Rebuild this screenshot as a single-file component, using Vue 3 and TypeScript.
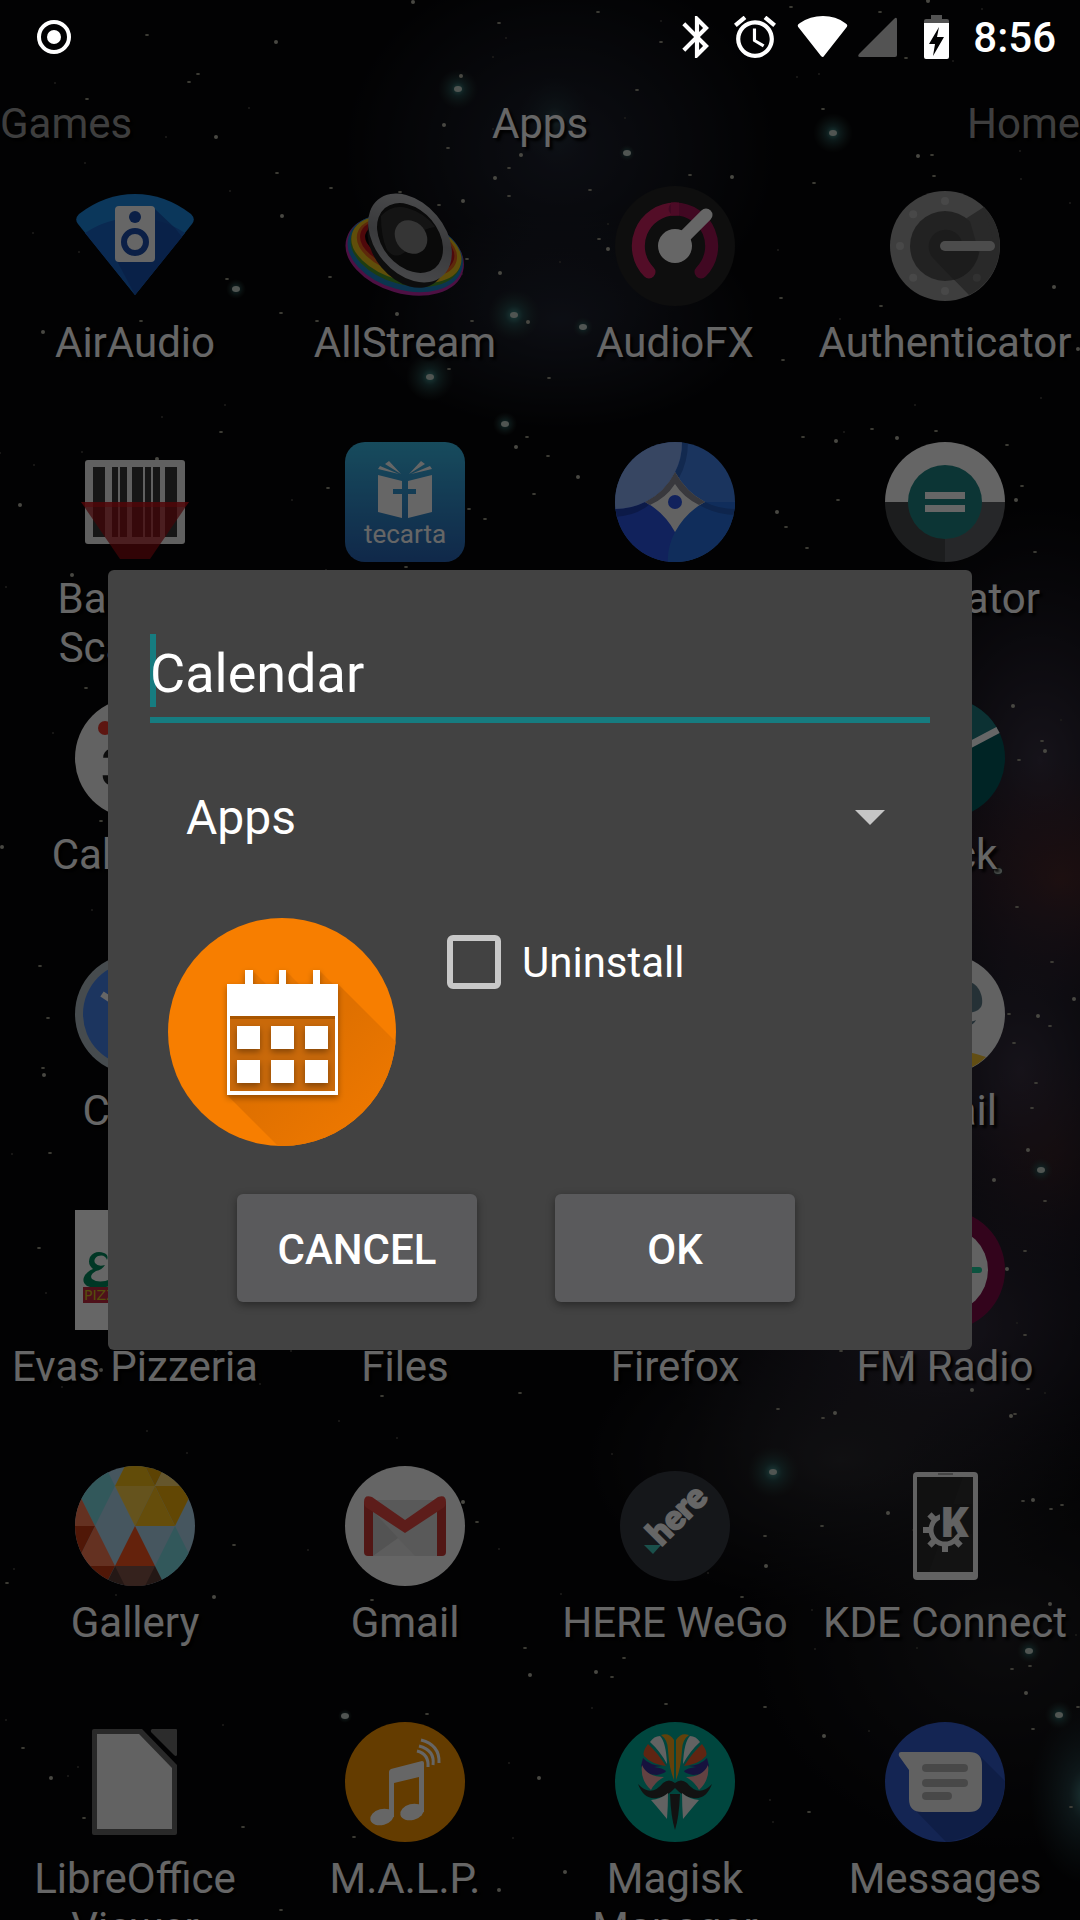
<script setup lang="ts">
import { ref } from 'vue'

interface AppEntry {
  icon: string
  name: string
}

const apps: AppEntry[] = [
  { icon: 'airaudio', name: 'AirAudio' },
  { icon: 'allstream', name: 'AllStream' },
  { icon: 'audiofx', name: 'AudioFX' },
  { icon: 'authenticator', name: 'Authenticator' },
  { icon: 'barcode', name: 'Barcode Scanner' },
  { icon: 'tecarta', name: '' },
  { icon: 'browser', name: '' },
  { icon: 'calculator', name: 'Calculator' },
  { icon: 'calendar', name: 'Calendar' },
  { icon: '', name: '' },
  { icon: '', name: '' },
  { icon: 'clock', name: 'Clock' },
  { icon: 'watch', name: 'Clock' },
  { icon: '', name: '' },
  { icon: '', name: '' },
  { icon: 'email', name: 'Email' },
  { icon: 'pizzeria', name: 'Evas Pizzeria' },
  { icon: '', name: 'Files' },
  { icon: '', name: 'Firefox' },
  { icon: 'radio', name: 'FM Radio' },
  { icon: 'gallery', name: 'Gallery' },
  { icon: 'gmail', name: 'Gmail' },
  { icon: 'here', name: 'HERE WeGo' },
  { icon: 'kde', name: 'KDE Connect' },
  { icon: 'libre', name: 'LibreOffice Viewer' },
  { icon: 'malp', name: 'M.A.L.P.' },
  { icon: 'magisk', name: 'Magisk Manager' },
  { icon: 'messages', name: 'Messages' },
]

const stars: [number, number][] = [
  [413, 2], [598, 12], [499, 23], [276, 42], [198, 74], [189, 82], [461, 76], [637, 90], [823, 109], [444, 125],
  [661, 42], [791, 7], [928, 1], [880, 12], [906, 58], [918, 156], [932, 155], [448, 148], [521, 155], [147, 35],
  [87, 99], [216, 137], [277, 173], [331, 188], [282, 216], [227, 279], [141, 321], [43, 332], [281, 313],
  [330, 277], [397, 314], [317, 321], [509, 168], [495, 178], [509, 196], [439, 205], [463, 201], [400, 192],
  [467, 259], [528, 322], [449, 369], [472, 321], [500, 273], [590, 190], [690, 175], [732, 177], [814, 183],
  [599, 239], [608, 249], [549, 378], [783, 360], [1054, 287], [881, 306], [934, 176], [1078, 349], [781, 298],
  [221, 432], [157, 459], [328, 488], [527, 437], [516, 447], [469, 509], [485, 519], [20, 505], [534, 494],
  [406, 567], [72, 575], [548, 456], [803, 437], [836, 441], [872, 429], [936, 431], [897, 438], [1007, 445],
  [838, 500], [777, 512], [786, 527], [807, 548], [1016, 500], [1022, 486], [1035, 552], [578, 477], [86, 688],
  [101, 821], [2, 847], [40, 966], [48, 1018], [44, 1075], [50, 1153], [43, 1068], [1013, 706], [1019, 760],
  [1042, 741], [1045, 751], [1017, 907], [1052, 962], [1074, 999], [1009, 1014], [1050, 1026], [1038, 1016],
  [1036, 1083], [1032, 1108], [1028, 1150], [1014, 1043], [39, 1248], [101, 1370], [382, 1396], [520, 1393],
  [994, 1180], [1045, 1201], [1025, 1251], [1007, 1269], [1025, 1335], [1028, 1389], [972, 1390], [902, 1357],
  [778, 1409], [835, 1413], [841, 1351], [1015, 1414], [1011, 1416], [823, 1418], [234, 1545], [214, 1597],
  [7, 1583], [477, 1522], [463, 1502], [372, 1600], [525, 1648], [530, 1675], [427, 1714], [23, 1748], [51, 1778],
  [84, 1818], [243, 1827], [499, 1890], [281, 1910], [354, 1837], [539, 1778], [765, 1536], [822, 1526],
  [766, 1566], [742, 1597], [1023, 1501], [1033, 1500], [1051, 1509], [1062, 1505], [888, 1513], [1012, 1669],
  [1030, 1666], [1026, 1693], [1078, 1707], [1033, 1729], [824, 1736], [765, 1707], [666, 1704], [596, 1672],
  [612, 1677], [624, 1658], [565, 1872], [809, 1812], [1071, 1807], [1050, 1604],
]

/* x, y, halo radius */
const glows: [number, number, number][] = [
  [458, 89, 20], [833, 133, 20], [627, 153, 8], [236, 289, 10], [514, 315, 26], [430, 377, 24], [583, 327, 10],
  [505, 424, 12], [1041, 1170, 12], [773, 1472, 26], [345, 1716, 7], [1029, 1651, 12], [1059, 1715, 14],
  [998, 871, 6],
]

const dust: [number, number][] = []
let seed = 17
const next = (): number => {
  seed = (seed * 16807) % 2147483647
  return seed / 2147483647
}
for (let i = 0; i < 120; i++) {
  dust.push([Math.round(next() * 1080), Math.round(next() * 1920)])
}

const title = ref('Calendar')
const group = ref('Apps')
const uninstall = ref(false)
const dotAngles = [90, 135, 180, 225, 270, 45]
const teeth = [0, 45, 90, 135, 180, 225, 270, 315]
</script>

<template>
  <div class="launcher">
    <svg class="wallpaper" viewBox="0 0 1080 1920" preserveAspectRatio="xMidYMid slice" aria-hidden="true">
      <defs>
        <radialGradient id="haze-blue">
          <stop offset="0" stop-color="#262b3c" stop-opacity=".8" />
          <stop offset="1" stop-color="#262b3c" stop-opacity="0" />
        </radialGradient>
        <radialGradient id="haze-red">
          <stop offset="0" stop-color="#5e2a24" stop-opacity=".8" />
          <stop offset="1" stop-color="#4a2230" stop-opacity="0" />
        </radialGradient>
        <radialGradient id="haze-violet">
          <stop offset="0" stop-color="#3d3548" stop-opacity=".9" />
          <stop offset="1" stop-color="#2a2638" stop-opacity="0" />
        </radialGradient>
        <radialGradient id="haze-grey">
          <stop offset="0" stop-color="#302f34" stop-opacity=".8" />
          <stop offset="1" stop-color="#26252c" stop-opacity="0" />
        </radialGradient>
        <radialGradient id="haze-teal">
          <stop offset="0" stop-color="#4a8a8a" />
          <stop offset=".3" stop-color="#2d4f55" stop-opacity=".7" />
          <stop offset="1" stop-color="#20343c" stop-opacity="0" />
        </radialGradient>
        <radialGradient id="star-glow">
          <stop offset="0" stop-color="#4a9c98" />
          <stop offset=".35" stop-color="#2a5a5a" stop-opacity=".7" />
          <stop offset="1" stop-color="#2a3a35" stop-opacity="0" />
        </radialGradient>
      </defs>
      <rect width="1080" height="1920" fill="#060608" />
      <ellipse cx="560" cy="150" rx="220" ry="190" fill="url(#haze-blue)" />
      <ellipse cx="560" cy="320" rx="200" ry="110" fill="url(#haze-blue)" />
      <ellipse cx="555" cy="120" rx="36" ry="44" fill="url(#haze-teal)" opacity=".5" />
      <ellipse cx="1040" cy="760" rx="180" ry="260" fill="url(#haze-violet)" />
      <ellipse cx="1060" cy="880" rx="130" ry="120" fill="url(#haze-red)" />
      <ellipse cx="1020" cy="1070" rx="190" ry="280" fill="url(#haze-violet)" />
      <ellipse cx="1050" cy="1160" rx="90" ry="110" fill="url(#haze-red)" opacity=".4" />
      <ellipse cx="940" cy="1330" rx="280" ry="190" fill="url(#haze-violet)" />
      <ellipse cx="840" cy="1460" rx="260" ry="150" fill="url(#haze-grey)" />
      <ellipse cx="1000" cy="1640" rx="260" ry="220" fill="url(#haze-grey)" opacity=".7" />
      <ellipse cx="1086" cy="1795" rx="56" ry="90" fill="url(#haze-teal)" />
      <circle v-for="(d, i) in dust" :key="'d' + i" :cx="d[0]" :cy="d[1]" r="1" fill="#4c4a44" />
      <circle v-for="(g, i) in glows" :key="'g' + i" :cx="g[0]" :cy="g[1]" :r="g[2]" fill="url(#star-glow)" />
      <ellipse v-for="(g, i) in glows" :key="'h' + i" :cx="g[0]" :cy="g[1]" rx="4" ry="3" fill="#c8d4cc" />
      <ellipse
        v-for="(s, i) in stars"
        :key="'s' + i"
        :cx="s[0]"
        :cy="s[1]"
        rx="2"
        :ry="i % 3 ? 1 : 2"
        :fill="i % 3 ? '#a3a08f' : '#b5b3a5'"
      />
    </svg>

    <main class="home">
      <nav class="tabs" aria-label="Categories">
        <button type="button" class="tab">Games</button>
        <button type="button" class="tab tab-current">Apps</button>
        <button type="button" class="tab">Home</button>
      </nav>

      <div class="grid">
        <component :is="app.icon || app.name ? 'button' : 'div'" v-for="(app, i) in apps" :key="i" class="app">
          <svg class="app-icon" viewBox="0 0 120 120" aria-hidden="true">
            <g v-if="app.icon === 'airaudio'">
              <path d="M3 38Q-1 33 4 28Q30 8 60 8T116 28Q121 33 117 38L60 109Z" fill="#1d8ae4" />
              <path d="M10 47Q32 32 60 32T110 47L60 109Z" fill="#1b66cb" />
              <path d="M80 23L100 42L107 51L60 109L42 75Z" fill="#164fae" opacity=".8" />
              <rect x="40" y="20" width="40" height="56" rx="4" fill="#fff" />
              <circle cx="60" cy="31" r="6" fill="#1d4fae" />
              <circle cx="60" cy="56" r="11" fill="none" stroke="#1d4fae" stroke-width="6" />
            </g>
            <g v-else-if="app.icon === 'allstream'">
              <defs>
                <linearGradient id="rim" x2="1" y2="1">
                  <stop offset="0" stop-color="#c8c9cc" />
                  <stop offset=".5" stop-color="#8f9095" />
                  <stop offset="1" stop-color="#c0c1c6" />
                </linearGradient>
              </defs>
              <g transform="rotate(16 60 68)" fill="none" stroke-width="5">
                <ellipse cx="60" cy="69" rx="58" ry="36" stroke="#c22aa8" />
                <ellipse cx="60" cy="67" rx="56" ry="34" stroke="#1c84c6" stroke-width="6" />
                <ellipse cx="60" cy="65" rx="54" ry="31" stroke="#4c9a2c" />
                <ellipse cx="60" cy="63" rx="53" ry="28" stroke="#f0c419" stroke-width="7" />
                <ellipse cx="60" cy="61" rx="49" ry="25" stroke="#e8641c" />
                <ellipse cx="60" cy="60" rx="46" ry="22" stroke="#c4161c" />
              </g>
              <ellipse cx="61" cy="61" rx="46" ry="32" transform="rotate(50 61 61)" fill="#222" />
              <ellipse cx="65" cy="52" rx="50" ry="35" transform="rotate(50 65 52)" fill="url(#rim)" />
              <ellipse cx="65" cy="52" rx="39" ry="28" transform="rotate(50 65 52)" fill="#191919" />
              <path d="M36 30Q47 18 62 22Q80 27 90 41Q68 44 60 66Q50 74 42 64Q36 50 36 30Z" fill="#404040" opacity=".7" />
              <ellipse cx="66" cy="51" rx="18" ry="15" transform="rotate(50 66 51)" fill="#858585" />
            </g>
            <g v-else-if="app.icon === 'audiofx'">
              <circle cx="60" cy="60" r="60" fill="#232323" />
              <path d="M34 86A37 37 0 0 1 60 23" fill="none" stroke="#cf2263" stroke-width="13" stroke-linecap="round" />
              <path d="M60 23A37 37 0 0 1 86 86" fill="none" stroke="#a31555" stroke-width="13" stroke-linecap="round" />
              <path d="M56 23H64" stroke="#bd1c5f" stroke-width="13" />
              <path d="M62 58L91 29" stroke="#fff" stroke-width="13" stroke-linecap="round" />
              <circle cx="60" cy="60" r="17" fill="#fff" />
            </g>
            <g v-else-if="app.icon === 'authenticator'">
              <circle cx="60" cy="60" r="55" fill="#9b9b9b" />
              <path d="M99 21A55 55 0 0 1 84 109L44 68L60 46Z" fill="#666" />
              <circle cx="60" cy="60" r="35" fill="#555" />
              <path d="M99 21L85 35L92 60H110Z" fill="#666" />
              <path d="M48 72A17 17 0 1 1 77 56L94 66A35 35 0 0 1 69 94Z" fill="#464646" />
              <circle
                v-for="a in dotAngles"
                :key="a"
                :cx="60 + 45 * Math.cos((a * Math.PI) / 180)"
                :cy="60 + 45 * Math.sin((a * Math.PI) / 180)"
                r="4"
                :fill="a === 45 ? '#7b7b7b' : '#b4b4b4'"
              />
              <rect x="55" y="55" width="55" height="10" rx="5" fill="#bebebe" />
            </g>
            <g v-else-if="app.icon === 'barcode'">
              <rect x="10" y="18" width="100" height="84" rx="3" fill="#f0f0f0" />
              <path
                d="M18 25H30V95H18ZM37 25H43V95H37ZM45 25H52V95H45ZM57 25H68V95H57ZM70 25H76V95H70ZM78 25H85V95H78ZM90 25H102V95H90Z"
                fill="#383838"
              />
              <path d="M6 60H114L75 117H45Z" fill="#a80c12" opacity=".72" />
              <path d="M6 60H114L110 65H10Z" fill="#e01015" opacity=".5" />
            </g>
            <g v-else-if="app.icon === 'tecarta'">
              <defs>
                <linearGradient id="tecarta-bg" x2="0" y2="1">
                  <stop offset="0" stop-color="#3abce8" />
                  <stop offset="1" stop-color="#2965b8" />
                </linearGradient>
              </defs>
              <rect width="120" height="120" rx="20" fill="url(#tecarta-bg)" />
              <path
                d="M33 33L57 39V47H48V52H57V76L33 70ZM87 33L63 39V47H71V52H63V76L87 70ZM33 27L35 24L54 32ZM40 22L44 19L56 32ZM87 27L85 24L66 32ZM80 22L76 19L64 32Z"
                fill="#fff"
              />
              <text x="60" y="101" text-anchor="middle" font-size="26" fill="#fff">tecarta</text>
            </g>
            <g v-else-if="app.icon === 'browser'">
              <defs>
                <clipPath id="disc"><circle cx="60" cy="60" r="60" /></clipPath>
              </defs>
              <g clip-path="url(#disc)">
                <rect width="120" height="120" fill="#4383ec" />
                <path d="M0 60H60V120H0Z" fill="#2b55e6" />
                <path d="M60 90Q52 106 53 120H120V60H90Q72 68 60 90Z" fill="#2a72e4" />
                <path d="M90 60Q104 67 120 67V73Q102 73 84 63Z" fill="#1c4a9c" opacity=".5" />
                <path d="M30 60Q16 67 0 67V75Q20 74 34 63Z" fill="#1c3aa0" opacity=".7" />
                <path d="M60 30Q67 18 67 0H73Q73 20 64 36Z" fill="#1c4aa0" opacity=".5" />
                <path d="M60 30Q71 50 90 60Q71 70 60 90Q49 70 30 60Q50 50 60 30Z" fill="#f6f6f6" />
                <path d="M60 30Q71 50 90 60L84 63Q68 55 60 42Q51 56 35 63L30 60Q50 50 60 30Z" fill="#8c8c98" />
                <path d="M0 67Q16 67 30 60Q50 50 60 30Q67 16 67 0H0Z" fill="#8aaef4" />
                <circle cx="60" cy="60" r="7" fill="#2b55e6" />
              </g>
            </g>
            <g v-else-if="app.icon === 'calculator'">
              <path d="M0 60A60 60 0 0 1 120 60Z" fill="#fcfcfc" />
              <path d="M0 60A60 60 0 0 0 60 120V60Z" fill="#464a4c" />
              <path d="M120 60A60 60 0 0 1 60 120V60Z" fill="#606266" />
              <circle cx="60" cy="60" r="37" fill="#208684" />
              <path d="M40 50H80V57H40ZM40 63H80V70H40Z" fill="#fff" />
            </g>
            <g v-else-if="app.icon === 'calendar'">
              <circle cx="60" cy="60" r="60" fill="#f4f4f4" />
              <circle cx="30" cy="30" r="7" fill="#e8392c" />
              <text x="26" y="88" font-size="54" font-weight="700" fill="#222">31</text>
            </g>
            <g v-else-if="app.icon === 'clock'">
              <circle cx="60" cy="60" r="60" fill="#005a5e" />
              <path d="M60 60V0A60 60 0 0 1 112 30Z" fill="#1e7c80" />
              <path d="M60 60L113 32" stroke="#fff" stroke-width="7" />
            </g>
            <g v-else-if="app.icon === 'watch'">
              <circle cx="60" cy="60" r="60" fill="#aebcc4" />
              <circle cx="60" cy="60" r="52" fill="#4684ee" />
              <path d="M27 40L60 62" stroke="#fff" stroke-width="6" />
            </g>
            <g v-else-if="app.icon === 'email'">
              <circle cx="60" cy="60" r="60" fill="#f4f4f4" />
              <path d="M80 28C94 26 100 46 96 53Q92 59 80 59Z" fill="#5c7a88" />
              <path d="M80 68Q87 68 91 66Q89 70 84 72Z" fill="#5c7a88" />
              <path d="M60 94Q80 96 101 103Q86 118 60 120Z" fill="#f6c234" />
            </g>
            <g v-else-if="app.icon === 'pizzeria'">
              <rect width="120" height="120" fill="#fff" />
              <path
                d="M32 50Q30 44 23 46Q18 49 20 53Q23 57 30 55Q27 60 21 61Q14 65 17 69Q24 74 36 69V76Q20 80 12 76Q6 72 10 65Q13 61 18 59Q12 54 15 47Q20 40 29 43Q34 45 32 50Z"
                fill="#008a5c"
              />
              <rect x="8" y="77" width="104" height="16" fill="#c42b42" />
              <text x="9" y="90" class="pizza" font-size="14" fill="#d8c41c">PIZZERIA</text>
            </g>
            <g v-else-if="app.icon === 'radio'">
              <circle cx="60" cy="60" r="60" fill="#800c48" />
              <circle cx="60" cy="60" r="43" fill="#f4f4f4" />
              <path d="M24 60H94" stroke="#1ccf9f" stroke-width="6" stroke-linecap="round" />
            </g>
            <g v-else-if="app.icon === 'gallery'">
              <defs>
                <clipPath id="gallery-disc"><circle cx="60" cy="60" r="60" /></clipPath>
              </defs>
              <g clip-path="url(#gallery-disc)">
                <rect width="120" height="120" fill="#b0d6ee" />
                <path d="M0 0H30L40 20L20 60L0 20ZM100 60L120 100V120H90L80 100Z" fill="#7edbe4" />
                <path d="M50 0H70L80 20H40Z" fill="#f6bd18" />
                <path d="M70 0H90L80 20Z" fill="#e8a808" />
                <path d="M90 0L80 20H120Z" fill="#fdd66e" />
                <path d="M40 20H80L60 60Z" fill="#fdd04a" />
                <path d="M80 20H120L100 60Z" fill="#f4b20a" />
                <path d="M80 20L100 60H60Z" fill="#fcc01c" />
                <path d="M60 60L80 100H40Z" fill="#f9551f" />
                <path d="M0 20L20 60H0ZM20 60L40 100H0Z" fill="#fa7a54" />
                <path d="M0 60H20L0 100ZM0 100H40L30 120H0Z" fill="#c83a12" />
                <path d="M40 100H80L90 120H30Z" fill="#5a3c36" />
                <path d="M40 100H80L70 120H50Z" fill="#86564a" />
              </g>
            </g>
            <g v-else-if="app.icon === 'gmail'">
              <circle cx="60" cy="60" r="60" fill="#fcfcfc" />
              <path d="M24 34H96V90H24Z" fill="#dedede" />
              <path d="M28 45L54 73L28 90Z" fill="#cfcfcf" />
              <path d="M28 90L53 72L70 90Z" fill="#e8e8e8" />
              <path d="M19 36H28V90H23Q19 90 19 86ZM101 36H92V90H97Q101 90 101 86Z" fill="#cc3a36" />
              <path d="M19 36Q19 28 27 31L60 54L93 31Q101 28 101 36Q101 40 98 42L60 67L22 42Q19 40 19 36Z" fill="#e84a42" />
            </g>
            <g v-else-if="app.icon === 'here'">
              <circle cx="60" cy="60" r="55" fill="#363a42" />
              <path d="M29 79H46L38 88Z" fill="#42c9bc" />
              <text class="here" transform="translate(46 81) rotate(-45)" font-size="34" fill="#fff" stroke="#fff" stroke-width="2">here</text>
            </g>
            <g v-else-if="app.icon === 'kde'">
              <rect x="28" y="6" width="65" height="108" rx="4" fill="#f4f4f4" />
              <rect x="32" y="11" width="56" height="95" fill="#2b2b2b" />
              <path d="M78 11H88V106H44Z" fill="#383838" opacity=".5" />
              <path d="M53 8H68" stroke="#666" stroke-width="1" />
              <g fill="#f4f4f4">
                <rect v-for="t in teeth" :key="t" x="57" y="42" width="6" height="8" :transform="`rotate(${t} 60 64)`" />
              </g>
              <circle cx="60" cy="64" r="14" fill="none" stroke="#f4f4f4" stroke-width="5" />
              <path d="M55 38H87V68H80L74 66L68 72L55 72Z" fill="#2b2b2b" />
              <text class="kde-k" x="55" y="71" font-size="42" fill="#f4f4f4">K</text>
            </g>
            <g v-else-if="app.icon === 'libre'">
              <path d="M19 7H67L102 43V111Q102 113 100 113H19Q17 113 17 111V9Q17 7 19 7Z" fill="#686868" />
              <path d="M22 12H64L97 46V107H22Z" fill="#f6f6f6" />
              <path d="M77 7H101Q102 7 102 8V33Q101 35 99 33L76 10Q75 8 77 7Z" fill="#6e6e6e" />
            </g>
            <g v-else-if="app.icon === 'malp'">
              <circle cx="60" cy="60" r="60" fill="#fb9600" />
              <path d="M44 50Q44 48 46 47L77 39Q79 39 79 41V90H74V55L49 61V95H44Z" fill="#fff" />
              <ellipse cx="37" cy="95" rx="12" ry="8" transform="rotate(-15 37 95)" fill="#fff" />
              <ellipse cx="67" cy="90" rx="12" ry="8" transform="rotate(-15 67 90)" fill="#fff" />
              <path d="M72 29Q84 32 83 45M74 24Q90 28 88 43M76 18Q95 23 94 41" fill="none" stroke="#fff" stroke-width="3" />
            </g>
            <g v-else-if="app.icon === 'magisk'">
              <circle cx="60" cy="60" r="60" fill="#00af9b" />
              <g v-for="s in [1, -1]" :key="s" :transform="`translate(60 0) scale(${s} 1)`">
                <path d="M1 58V18Q6 10 14 13Q7 18 7 28Q6 46 1 58Z" fill="#f6a41c" />
                <path d="M8 42Q9 20 15 14Q21 14 25 20Q15 29 8 42Z" fill="#f4f4f4" />
                <path d="M9 44Q18 30 27 22Q33 30 31 34Q24 42 9 44Z" fill="#ee5c2e" />
                <path d="M13 44Q26 43 32 36L34 44Q29 53 18 53Q9 51 9 49Q12 46 21 45Z" fill="#372f9c" />
                <path d="M11 55Q28 55 33 43Q35 58 24 68Q20 60 11 55Z" fill="#f4a6a6" />
                <path d="M0 61Q6 56 12 61Q24 76 37 62Q31 78 18 76Q8 75 0 66Z" fill="#2d2d2d" />
                <path d="M7 71Q14 77 24 78Q17 86 8 97Q7 84 7 71Z" fill="#f4f4f4" />
                <path d="M0 72L5 72Q4 96 0 108Z" fill="#2d2d2d" />
              </g>
            </g>
            <g v-else-if="app.icon === 'messages'">
              <circle cx="60" cy="60" r="60" fill="#335cd0" />
              <path d="M95 34L120 59Q117 112 61 120L30 88Z" fill="#274bb0" />
              <path d="M16 30H84Q97 30 97 43V77Q97 90 84 90H37Q24 90 24 77V48L14 34Q13 30 16 30Z" fill="#f2f2f2" />
              <rect x="37" y="42" width="46" height="8" rx="4" fill="#b5b5b5" />
              <rect x="37" y="57" width="46" height="8" rx="4" fill="#b5b5b5" />
              <rect x="37" y="70" width="30" height="8" rx="4" fill="#b5b5b5" />
            </g>
          </svg>
          <span class="app-name">{{ app.name }}</span>
        </component>
      </div>
    </main>

    <div class="scrim"></div>

    <header class="status">
      <svg width="36" height="36" viewBox="0 0 36 36" aria-hidden="true">
        <circle cx="18" cy="18" r="15" fill="none" stroke="#fff" stroke-width="4" />
        <circle cx="18" cy="18" r="7" fill="#fff" />
      </svg>
      <div class="status-icons">
        <svg width="32" height="42" viewBox="4.4 2 15.2 20" aria-hidden="true">
          <path
            fill="#fff"
            d="M17.71 7.71L12 2h-1v7.59L6.41 5 5 6.41 10.59 12 5 17.59 6.41 19 11 14.41V22h1l5.71-5.71-4.3-4.29 4.3-4.29zM13 5.83l1.88 1.88L13 9.59V5.83zm1.88 10.46L13 18.17v-3.76l1.88 1.88z"
          />
        </svg>
        <svg width="42" height="42" viewBox="2 2 20 20" aria-hidden="true">
          <path
            fill="#fff"
            d="M22 5.72l-4.6-3.86-1.29 1.53 4.6 3.86L22 5.72zM7.88 3.39L6.6 1.86 2 5.71l1.29 1.53 4.59-3.85zM12.5 8H11v6l4.75 2.85.75-1.23-4-2.37V8zM12 4c-4.97 0-9 4.03-9 9s4.02 9 9 9c4.97 0 9-4.03 9-9s-4.03-9-9-9zm0 16c-3.87 0-7-3.13-7-7s3.13-7 7-7 7 3.13 7 7-3.13 7-7 7z"
          />
        </svg>
        <div class="signals">
          <svg width="51" height="42" viewBox="0 0 51 42" aria-hidden="true">
            <path fill="#fff" d="M2 12Q-1 9 3 7Q13 0 26 0T48 7Q52 9 49 12L27 40Q26 42 24 40Z" />
          </svg>
          <svg width="43" height="42" viewBox="0 0 43 42" aria-hidden="true">
            <path fill="#535353" d="M37 3Q40 0 40 4V39Q40 41 38 41H3Q0 41 2 38Z" />
          </svg>
        </div>
        <svg width="31" height="44" viewBox="0 0 31 44" aria-hidden="true">
          <path fill="#535353" d="M10 0H21V4H26Q28 4 28 6V8H3V6Q3 4 5 4H10Z" />
          <path fill="#fff" fill-rule="evenodd" d="M3 8H28V42Q28 44 26 44H5Q3 44 3 42ZM18 12L8 29H14L12 41L23 22H16Z" />
        </svg>
        <time class="time">8:56</time>
      </div>
    </header>

    <div class="overlay">
      <form class="dialog" role="dialog" aria-label="Edit app" @submit.prevent>
        <div class="title-field">
          <span class="caret"></span>
          <input v-model="title" class="title-input" type="text" aria-label="Name" />
        </div>
        <div class="group-field">
          <select v-model="group" class="group-select" aria-label="Category">
            <option>Apps</option>
          </select>
          <svg class="arrow" width="30" height="15" viewBox="0 0 30 15" aria-hidden="true">
            <path d="M0 0H30L15 15Z" fill="#c6c6c6" />
          </svg>
        </div>
        <div class="details">
          <svg class="big-icon" viewBox="0 0 228 228" aria-hidden="true">
            <defs>
              <clipPath id="big-disc"><circle cx="114" cy="114" r="114" /></clipPath>
              <linearGradient id="long-shadow" x2="1" y2="1">
                <stop offset=".4" stop-color="#df7000" />
                <stop offset="1" stop-color="#f57c00" />
              </linearGradient>
              <filter id="soft" x="-20%" y="-20%" width="140%" height="140%">
                <feDropShadow dx="0" dy="3" stdDeviation="3" flood-opacity=".35" />
              </filter>
            </defs>
            <circle cx="114" cy="114" r="114" fill="#f77e00" />
            <g clip-path="url(#big-disc)">
              <path d="M170 66L240 136V240H122L59 177Z" fill="url(#long-shadow)" />
              <path d="M85 53L98 66H85ZM118 53L131 66H118ZM152 53L165 66H152Z" fill="#e87600" />
            </g>
            <path filter="url(#soft)" d="M59 66H77V52H85V66H111V52H118V66H145V52H152V66H170V177H59Z" fill="#fff" />
            <path d="M62 98H167V173H62Z" fill="#c9690a" />
            <path d="M62 98H167V101H62Z" fill="#a85500" />
            <g fill="#fff" filter="url(#soft)">
              <path d="M69 108h23v23h-23zM103 108h23v23h-23zM137 108h23v23h-23zM69 142h23v23h-23zM103 142h23v23h-23zM137 142h23v23h-23z" />
            </g>
          </svg>
          <label class="check">
            <input v-model="uninstall" type="checkbox" class="box" />
            <span class="check-text">Uninstall</span>
          </label>
        </div>
        <div class="actions">
          <button type="button" class="action">CANCEL</button>
          <button type="submit" class="action">OK</button>
        </div>
      </form>
    </div>
  </div>
</template>

<style>
body {
  background: #000;
}
</style>

<style scoped>
.launcher {
  position: relative;
  height: 100vh;
  overflow: hidden;
  font-family: Roboto, 'Liberation Sans', sans-serif;
  color: #fff;
}
.launcher * {
  box-sizing: border-box;
}
button,
input,
select {
  margin: 0;
  padding: 0;
  border: 0;
  background: none;
  font-family: inherit;
  color: inherit;
}
.wallpaper {
  position: absolute;
  inset: 0;
  width: 100%;
  height: 100%;
}
.home {
  position: relative;
  padding-top: 99px;
}
.tabs {
  display: flex;
  justify-content: space-between;
  margin-bottom: 38px;
}
.tab {
  flex: 1;
  font-size: 42px;
  line-height: 49px;
  text-align: left;
  color: #9c9c9c;
  text-shadow: 3px 3px 3px #000;
}
.tab:last-child {
  text-align: right;
}
.tab-current {
  text-align: center;
  color: #fff;
}
.grid {
  display: grid;
  grid-template-columns: repeat(4, 1fr);
  row-gap: 26px;
}
.app {
  display: flex;
  flex-direction: column;
  align-items: center;
  gap: 12px;
  min-width: 0;
}
.app-icon {
  width: 120px;
  height: 120px;
}
.app-name {
  height: 98px;
  font-size: 42px;
  line-height: 49px;
  text-align: center;
  text-shadow: 3px 3px 3px #000;
}
.here {
  font-family: Lato, sans-serif;
  font-weight: 900;
}
.kde-k {
  font-family: 'Open Sans', sans-serif;
  font-weight: 800;
}
.pizza {
  font-family: 'DejaVu Sans', sans-serif;
}
.scrim {
  position: absolute;
  inset: 0;
  background: rgba(0, 0, 0, 0.6);
}
.status {
  position: absolute;
  inset: 0 0 auto 0;
  display: flex;
  align-items: center;
  justify-content: space-between;
  height: 74px;
  padding: 0 24px 0 36px;
}
.status-icons {
  display: flex;
  align-items: center;
  gap: 21px;
}
.signals {
  display: flex;
  gap: 9px;
}
.time {
  font-size: 42px;
  line-height: 49px;
  font-weight: 500;
}
.overlay {
  position: absolute;
  inset: 0;
  display: flex;
  align-items: center;
  justify-content: center;
}
.dialog {
  width: 80%;
  padding: 64px 42px 48px;
  border-radius: 6px;
  background: #424242;
}
.title-field {
  position: relative;
}
.caret {
  position: absolute;
  top: 0;
  left: 0;
  width: 6px;
  height: 73px;
  background: #167c80;
}
.title-input {
  position: relative;
  display: block;
  width: 100%;
  height: 89px;
  padding: 3px 0 7px;
  border-bottom: 6px solid #167c80;
  font-size: 54px;
  line-height: 73px;
  outline: none;
}
.group-field {
  position: relative;
  margin-top: 40px;
}
.group-select {
  display: block;
  width: 100%;
  height: 108px;
  padding-left: 36px;
  appearance: none;
  font-size: 48px;
}
.arrow {
  position: absolute;
  top: 47px;
  right: 45px;
  pointer-events: none;
}
.details {
  display: flex;
  align-items: flex-start;
  gap: 51px;
  margin: 47px 18px 48px;
}
.big-icon {
  width: 228px;
  height: 228px;
}
.check {
  display: flex;
  align-items: center;
  gap: 21px;
  margin-top: 15px;
  font-size: 42px;
  line-height: 54px;
}
.check-text {
  padding-top: 3px;
}
.box {
  width: 54px;
  height: 54px;
  border: 6px solid #c8c8c8;
  border-radius: 6px;
  appearance: none;
}
.actions {
  display: flex;
  gap: 78px;
  padding-left: 87px;
}
.action {
  width: 240px;
  height: 108px;
  padding-top: 2px;
  border-radius: 6px;
  background: #5a5a5c;
  box-shadow: 0 3px 8px rgba(0, 0, 0, 0.4);
  font-size: 42px;
  font-weight: 500;
}
</style>
